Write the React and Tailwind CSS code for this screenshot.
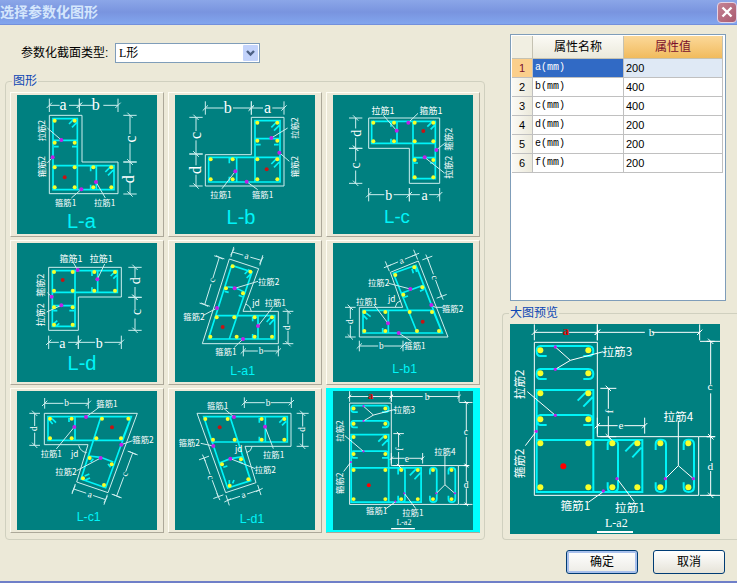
import {useState} from "react";

// dimension line from (x1,y1) to (x2,y2): end bars, slanted ticks and a gap for the letter
const dim = (x1, y1, x2, y2, bar = 20, gap = 28) => {
    const len = Math.hypot(x2 - x1, y2 - y1);
    const ux = (x2 - x1) / len;
    const uy = (y2 - y1) / len;
    const half = (len - gap) / 2;
    const ends = [[x1, y1], [x2, y2]].map(([x, y]) =>
        `M${x - uy * bar} ${y + ux * bar}L${x + uy * bar} ${y - ux * bar}` +
        `M${x - (ux - uy) * 8} ${y - (ux + uy) * -8}L${x + (ux - uy) * 8} ${y + (ux + uy) * -8}`
    ).join("");
    return `M${x1} ${y1}l${ux * half} ${uy * half}M${x2} ${y2}l${-ux * half} ${-uy * half}${ends}`;
}

const SHAPES = [
    {
        name: "L-a", box: "27 21 420 417", title: [220, 400, 60],
        outline: "M124 82H222V222H330V317H124Z",
        steel: "M135 92H208V305H135ZM135 233H318V305H135M138 176H152M135 157H208M192 176H206M265 235V303M248 250V236H262M248 290V303M183 108L199 92M192 118L208 102M292 252L308 236M300 262L316 246",
        leaders: "M118 120L160 156M118 225L134 208M190 330L220 304M292 330L264 282",
        dims: [[124, 52, 214, 52], [214, 52, 330, 52], [366, 82, 366, 222], [366, 222, 366, 318]],
        letters: [[165, 50, "a", 0], [263, 50, "b", 0], [366, 153, "c", -90], [362, 274, "d", -90]],
        letterSize: 48,
        bars: [[140, 98], [200, 98], [140, 164], [200, 164], [140, 238], [200, 238], [140, 298], [200, 298], [256, 238], [310, 238], [256, 298], [310, 298]],
        ties: [[160, 156], [134, 208], [220, 304], [264, 282]],
        core: [170, 268],
        labels: [[100, 128, "拉筋2", -90], [100, 236, "箍筋2", -90], [173, 343, "箍筋1", 0], [290, 343, "拉筋1", 0]],
    },
    {
        name: "L-b", box: "27 21 420 417", title: [225, 386, 60],
        outline: "M118 200H256V88H354V294H118Z",
        steel: "M267 98H342V282H267ZM128 208H342V282H128ZM267 152H342M270 170H284M324 170H338M212 210V282M190 226V211H204M190 266V281M316 118L332 102M324 128L340 112M316 228L332 212M324 238L340 222",
        leaders: "M316 150L365 120M340 194L370 220M208 250L168 302M242 281L275 305",
        dims: [[118, 60, 256, 60], [256, 60, 354, 60], [90, 88, 90, 198], [90, 198, 90, 294]],
        letters: [[185, 58, "b", 0], [305, 58, "a", 0], [90, 142, "c", -90], [88, 246, "d", -90]],
        letterSize: 48,
        bars: [[274, 104], [334, 104], [274, 158], [334, 158], [134, 214], [200, 214], [274, 214], [334, 214], [134, 274], [200, 274], [274, 274], [334, 274]],
        ties: [[316, 150], [340, 194], [208, 250], [242, 281]],
        core: [302, 244],
        labels: [[383, 120, "拉筋2", -90], [384, 236, "箍筋2", -90], [165, 318, "拉筋1", 0], [290, 318, "箍筋1", 0]],
    },
    {
        name: "L-c", box: "27 21 420 417", title: [219, 384, 56],
        outline: "M134 90H347V286H256V181H134Z",
        steel: "M143 100H334V166H143ZM267 100H334V272H267ZM219 100V166M201 116V102M201 152V165M267 209H334M270 225H282M318 225H331M310 116L326 100M320 124L334 110",
        leaders: "M218 128L178 82M253 104L282 76M337 186L362 166M302 208L360 254",
        dims: [[95, 90, 95, 181], [95, 181, 95, 286], [134, 320, 256, 320], [256, 320, 347, 320]],
        letters: [[97, 136, "d", -90], [95, 232, "c", -90], [194, 322, "b", 0], [302, 322, "a", 0]],
        letterSize: 42,
        bars: [[148, 104], [210, 104], [272, 104], [328, 104], [148, 160], [210, 160], [272, 160], [328, 160], [272, 216], [328, 216], [272, 268], [328, 268]],
        ties: [[218, 128], [253, 104], [337, 186], [302, 208]],
        core: [298, 129],
        labels: [[177, 68, "拉筋1", 0], [321, 66, "箍筋1", 0], [373, 154, "箍筋2", -90], [373, 238, "拉筋2", -90]],
        labelSize: 27,
    },
    {
        name: "L-d", box: "27 15 420 417", title: [222, 376, 60],
        outline: "M122 88H340V177H211V277H122Z",
        steel: "M133 98H328V163H133ZM133 98H201V265H133ZM269 98V163M252 114V100M252 148V162M133 203H201M136 218H148M184 218H198M308 114L322 100M316 122L328 110M136 258L148 248M142 266L154 256",
        leaders: "M209 96L196 74M268 124L290 78M131 176L118 164M160 202L116 222",
        dims: [[381, 88, 381, 178], [381, 178, 381, 277], [122, 313, 211, 313], [211, 313, 340, 313]],
        letters: [[383, 128, "d", -90], [386, 222, "c", -90], [163, 315, "a", 0], [274, 315, "b", 0]],
        letterSize: 42,
        bars: [[138, 102], [194, 102], [259, 102], [321, 102], [138, 158], [194, 158], [259, 158], [321, 158], [138, 208], [194, 208], [138, 260], [194, 260]],
        ties: [[209, 96], [268, 124], [131, 176], [160, 202]],
        core: [164, 126],
        labels: [[189, 61, "箍筋1", 0], [280, 61, "拉筋1", 0], [98, 142, "箍筋2", -90], [98, 230, "拉筋2", -90]],
        labelSize: 27,
    },
    {
        name: "L-a1", box: "27 15 420 417", title: [230, 398, 37],
        outline: "M190 63L278 92L231 220H337V317H109ZM240 198Q254 204 256 220",
        steel: "M197 82L258 102L190 303H127ZM150 233H326V303H190M276 233V303M260 250V236M260 288V302M184 147Q208 146 234 162M176 160L188 163M218 172L230 176M236 108L250 94M242 120L256 106M302 252L316 236M310 260L324 244",
        leaders: "M206 151L276 130M153 210L112 232M276 264L320 208M231 303L205 328",
        dims: [[199, 42, 286, 67, 16, 22], [160, 58, 116, 200, 16, 18], [232, 339, 337, 339, 16, 18], [366, 220, 366, 317, 16, 20]],
        letters: [[242, 54, "a", 15], [138, 126, "c", -70], [285, 338, "b", 0], [364, 269, "d", -90]],
        letterSize: 28,
        bars: [[200, 85], [253, 101], [180, 151], [231, 166], [152, 238], [205, 238], [266, 238], [318, 238], [133, 296], [212, 296], [266, 296], [318, 296]],
        ties: [[206, 151], [153, 210], [276, 264], [231, 303]],
        core: [170, 267],
        labels: [[308, 130, "拉筋2", 0], [84, 233, "箍筋2", 0], [328, 192, "拉筋1", 0], [180, 338, "箍筋1", 0], [270, 193, "jd", 0]],
    },
    {
        name: "L-b1", box: "27 15 420 417", title: [242, 393, 37],
        outline: "M106 208H236L199 103L283 69L372 297H106ZM214 207Q216 192 230 188",
        steel: "M117 217H327L355 285H117ZM208 106L276 82L355 285H280ZM193 217V285M176 285V270M234 165L298 142M240 178L252 174M288 160L300 154M124 224L140 236M118 232L130 244M264 92L268 106M274 88L278 102",
        leaders: "M259 153L194 136M322 201L334 208H356M192 256L150 200M224 285L262 310",
        dims: [[190, 85, 275, 50, 16, 22], [310, 60, 353, 175, 16, 18], [79, 208, 79, 297, 16, 20], [106, 324, 237, 324, 16, 18]],
        letters: [[232, 68, "a", -22], [332, 118, "c", 70], [77, 251, "d", -90], [172, 323, "b", 0]],
        letterSize: 28,
        bars: [[214, 111], [271, 88], [238, 170], [295, 148], [121, 222], [184, 222], [257, 222], [324, 222], [121, 279], [184, 279], [279, 279], [345, 279]],
        ties: [[259, 153], [322, 201], [192, 256], [224, 285]],
        core: [296, 251],
        labels: [[164, 132, "拉筋2", 0], [128, 188, "拉筋1", 0], [386, 209, "箍筋2", 0], [273, 322, "箍筋1", 0], [203, 180, "jd", 0]],
    },
    {
        name: "L-c1", box: "27 21 420 417", title: [242, 400, 37],
        outline: "M109 88H388L300 326L206 294L240 182H109ZM212 184Q218 204 236 206",
        steel: "M120 98H370L342 169H120ZM279 98H370L293 311L219 285ZM201 98V169M183 114V102M242 216L278 220L316 234M248 234L256 224M300 240L308 250M124 108L134 120M132 104L144 116M230 276L244 270M232 288L246 282",
        leaders: "M234 99L276 68M199 129L145 195M340 182L374 170M278 222L206 260",
        dims: [[110, 58, 241, 58, 16, 18], [80, 88, 80, 184, 16, 20], [374, 207, 326, 336, 16, 18], [197, 315, 293, 347, 16, 22]],
        letters: [[176, 57, "b", 0], [78, 134, "d", -90], [350, 270, "c", -70], [246, 331, "a", 15]],
        letterSize: 28,
        bars: [[126, 104], [191, 104], [282, 104], [361, 104], [126, 163], [191, 163], [265, 163], [339, 163], [245, 222], [311, 241], [225, 283], [288, 303]],
        ties: [[234, 99], [199, 129], [340, 182], [278, 222]],
        core: [312, 130],
        labels: [[297, 56, "箍筋1", 0], [405, 164, "箍筋2", 0], [130, 207, "拉筋1", 0], [174, 261, "拉筋2", 0], [200, 207, "jd", 0]],
    },
    {
        name: "L-d1", box: "27 21 420 417", title: [258, 404, 37],
        outline: "M93 88H375V187H237L270 296L179 326ZM242 206Q256 202 258 188",
        steel: "M113 98H364V174H138ZM113 98L185 312L254 290L192 98M298 98V174M280 116V102M280 158V172M162 236L193 224L232 218M172 250L184 246M218 232L230 238M340 116L354 102M348 124L360 112M190 300V288M200 298L204 288",
        leaders: "M204 99L172 72M297 128L322 194M142 186L104 178M193 224L268 254",
        dims: [[235, 56, 376, 56, 16, 18], [410, 88, 410, 187, 18, 20], [114, 222, 157, 338, 16, 18], [185, 349, 280, 318, 16, 22]],
        letters: [[306, 56, "b", 0], [408, 136, "d", -90], [134, 280, "c", 70], [232, 332, "a", -18]],
        letterSize: 28,
        bars: [[118, 105], [185, 105], [287, 105], [355, 105], [141, 167], [206, 167], [287, 167], [355, 167], [168, 241], [225, 226], [191, 305], [247, 286]],
        ties: [[204, 99], [297, 128], [142, 186], [193, 224]],
        core: [161, 130],
        labels: [[155, 63, "箍筋1", 0], [70, 173, "箍筋2", 0], [323, 209, "拉筋1", 0], [298, 256, "拉筋2", 0], [218, 191, "jd", 0]],
    },
    {
        name: "L-a2", box: "30 87 630 630", title: [349, 684, 36], large: true,
        outline: "M103 142H292V425H596V601H103ZM600 139H660M600 601H660M596 425H646",
        underline: "M291 711H399",
        steel: "M140 183H121Q110 183 110 168Q110 153 121 153H265Q280 153 280 168Q280 183 265 183H250" +
            "M140 252H121Q110 252 110 237Q110 222 121 222H265Q280 222 280 237Q280 252 265 252H250" +
            "M110 285H280V591H110ZM110 435H427V591H110ZM140 390H121Q112 390 112 375Q112 360 121 360H265Q278 360 278 375V390H250" +
            "M233 317L260 290M250 335L278 306M376 469L405 440M397 487L424 458" +
            "M323 465V447Q323 436 337 436Q354 436 354 447V577Q354 591 337 591Q323 591 323 577V562" +
            "M467 465V447Q467 434 482 434Q498 434 498 447V577Q498 591 482 591Q467 591 467 577V562" +
            "M551 465V447Q551 434 566 434Q582 434 582 447V577Q582 591 566 591Q551 591 551 577V562",
        leaders: "M166 156L211 196L166 223M211 196L310 170M82 290L166 361M76 452L109 409M265 622L310 590M403 620L351 551M535 377V512L496 551M535 512L580 551M325 425L340 440",
        dims: [[103, 112, 292, 112, 24, 20], [292, 112, 599, 112, 24, 22], [632, 139, 632, 425, 12, 26], [632, 425, 632, 601, 12, 30], [292, 392, 434, 392, 24, 20], [325, 280, 325, 425, 24, 22]],
        letters: [[455, 111, "b", 0], [630, 272, "c", 0], [631, 513, "d", 0], [363, 391, "e", 0], [327, 350, "f", -90]],
        letterSize: 34,
        redLetter: [198, 107, "a"],
        bars: [[121, 166], [265, 166], [121, 235], [265, 235], [121, 295], [265, 295], [121, 373], [265, 373], [121, 445], [265, 445], [337, 445], [412, 445], [481, 445], [565, 445], [121, 577], [265, 577], [337, 577], [412, 577], [481, 577], [565, 577]],
        ties: [[166, 156], [166, 223], [166, 361], [109, 409], [351, 551], [310, 588], [496, 551], [580, 551]],
        core: [190, 514],
        labels: [[352, 167, "拉筋3", 0], [535, 360, "拉筋4", 0], [56, 268, "拉筋2", -90], [56, 505, "箍筋2", -90], [226, 628, "箍筋1", 0], [390, 635, "拉筋1", 0]],
        labelSize: 35,
    },
];

const PROPERTIES = [
    {name: "a(mm)", value: 200},
    {name: "b(mm)", value: 400},
    {name: "c(mm)", value: 400},
    {name: "d(mm)", value: 200},
    {name: "e(mm)", value: 200},
    {name: "f(mm)", value: 200},
];

const Label = ({item, size, className}) => {
    const [x, y, text, angle = 0] = item;
    return (
        <text x={x} y={y} fontSize={size} textAnchor="middle" dominantBaseline="central"
              transform={`rotate(${angle} ${x} ${y})`} className={className}>{text}</text>
    )
}

const Drawing = ({shape, small, className}) => {
    const big = shape.large;
    const thin = big && small ? 4 : 3;
    const thick = big && small ? 8 : big ? 6 : 5;
    const white = big ? "stroke-white" : "stroke-[#cdeeee]";
    // the detailed section is drawn at a smaller scale in the grid, so its letters grow a little
    const letterSize = big && small ? 44 : shape.letterSize;
    const labelSize = big && small ? 38 : shape.labelSize || 25;
    const [titleX, titleY, titleSize] = shape.title;

    return (
        <svg viewBox={shape.box} fill="none" className={`block bg-[#008080] ${className}`} aria-label={shape.name}>
            <g className={white} strokeWidth={thin}>
                <path d={shape.outline}/>
                {shape.dims.map((d, i) => <path key={i} d={dim(...d)}/>)}
            </g>
            {shape.underline && <path d={shape.underline} className="stroke-white" strokeWidth="6"/>}
            <path d={shape.steel} className="stroke-[#00f4f8]" strokeWidth={thick}/>
            <path d={shape.leaders} className={white} strokeWidth={thin}/>
            {shape.bars.map(([x, y], i) => (
                <circle key={i} cx={x} cy={y} r={big ? 9 : 6} className="fill-[#f6ff2a]"/>
            ))}
            {shape.ties.map(([x, y], i) => (
                <circle key={i} cx={x} cy={y} r={big ? 5 : 6} className="fill-[#c020e8]"/>
            ))}
            <circle cx={shape.core[0]} cy={shape.core[1]} r={big ? 9 : 6}
                    className={big ? "fill-[#ff0000]" : "fill-[#c41414]"}/>
            {shape.letters.map((item, i) => (
                <Label key={i} item={item} size={letterSize} className="fill-white font-['Liberation_Serif',serif]"/>
            ))}
            {shape.redLetter && (
                <Label item={shape.redLetter} size={letterSize + 4} className="fill-[#e00000] font-bold font-['Liberation_Serif',serif]"/>
            )}
            {shape.labels.map((item, i) => (
                <Label key={i} item={item} size={labelSize}
                       className="fill-white font-['Noto_Sans_CJK_SC',sans-serif]"/>
            ))}
            <Label item={[titleX, titleY, shape.name]} size={titleSize}
                   className={big ? "fill-white font-['Liberation_Serif',serif]" : "fill-[#00f4f8] font-['Liberation_Sans',sans-serif]"}/>
        </svg>
    )
}

const App = () => {

    const [selected, setSelected] = useState("L-a2");
    const [row, setRow] = useState(0);

    const current = SHAPES.find((shape) => shape.name === selected);

    return (
        <div className="flex flex-col min-h-screen bg-[#ece9d8] border-b-2 border-[#6f7fc8] text-xs text-black font-['Liberation_Sans','Noto_Sans_CJK_SC',sans-serif]">
            <header className="flex items-center justify-between h-[25px] bg-linear-to-b from-[#8ba6e8] via-[#7994df] to-[#82a6ee] border-b border-[#7390dc]">
                <h1 className="text-sm leading-5 font-bold text-[#d4e6fc]">选择参数化图形</h1>
                <button type="button" aria-label="关闭"
                        className="flex items-center justify-center w-5 h-[21px] rounded-sm border border-[#e3d3e6] bg-linear-to-br from-[#c58394] to-[#a95a70]">
                    <svg viewBox="0 0 12 12" className="w-3 h-3 stroke-white" strokeWidth="2.4">
                        <path d="M1.5 1.5l9 9M10.5 1.5l-9 9"/>
                    </svg>
                </button>
            </header>

            <main className="flex flex-1 gap-[17px] pl-[5px]">
                <section className="flex-1 min-w-0 pt-[18px]">
                    <div className="flex items-center mb-[10px] pl-4">
                        <label htmlFor="section-type" className="w-[94px]">参数化截面类型:</label>
                        <div className="relative w-[145px]">
                            <select id="section-type"
                                    className="block w-full h-5 pl-[3px] pr-5 appearance-none bg-white border border-[#7f9db9] leading-4 font-['Liberation_Serif','Noto_Sans_CJK_SC',serif]">
                                <option>L形</option>
                            </select>
                            <svg viewBox="0 0 15 16" className="absolute right-[2px] top-[2px] w-[15px] h-4 pointer-events-none">
                                <rect width="15" height="16" rx="1" className="fill-[#c3d3fb]"/>
                                <path d="M4 6l3.5 3.5L11 6" fill="none" strokeWidth="2.4" className="stroke-[#4d6185]"/>
                            </svg>
                        </div>
                    </div>

                    <fieldset className="min-w-0 px-1 pt-[3px] pb-[6px] border border-[#d0d0bf] rounded">
                        <legend className="ml-[2px] px-px leading-4 text-[#0d46b4]">图形</legend>
                        <div className="grid grid-cols-3 gap-x-1 gap-y-[3px]">
                            {SHAPES.map((shape) => (
                                <button key={shape.name} type="button" onClick={() => setSelected(shape.name)}
                                        className={`px-[6px] py-[2px] border ${
                                            shape.name === selected
                                                ? "bg-[#00ffff] border-[#00ffff] border-b-[#aca899]"
                                                : "bg-[#ece9d8] border-t-[#fffdf4] border-l-[#fffdf4] border-r-[#aca899] border-b-[#aca899]"
                                        }`}>
                                    <Drawing shape={shape} small className="w-full aspect-[140/139]"/>
                                </button>
                            ))}
                        </div>
                    </fieldset>
                </section>

                <aside className="flex flex-col w-[235px] shrink-0 pt-[9px]">
                    <div className="flex-1 ml-2 mr-[11px] mb-1 p-px bg-white border border-[#7f9db9]">
                        <table className="table-fixed w-[211px] border-separate border-spacing-0">
                            <thead>
                            <tr className="h-[23px]">
                                <th scope="col" aria-label="#" className="w-[21px] p-0 bg-[#f1efe2] border-r border-b border-[#c5c2b2]"></th>
                                <th scope="col" className="w-[91px] p-0 font-normal bg-linear-to-b from-[#fbfaf5] to-[#ebe9db] border-r border-b border-[#c5c2b2]">属性名称</th>
                                <th scope="col" className="p-0 font-normal text-[#7a0f2c] bg-linear-to-b from-[#fbd898] to-[#f1bb5c] border-r border-b border-[#c5c2b2]">属性值</th>
                            </tr>
                            </thead>
                            <tbody>
                            {PROPERTIES.map((property, i) => (
                                <tr key={property.name} onClick={() => setRow(i)} className="h-[19px] text-[11px] leading-4">
                                    <th scope="row" className={`p-0 font-normal border-r border-b border-[#c0c0c0] ${
                                        i === row ? "bg-[#fbcf8c] text-[#7a0f2c]" : "bg-linear-to-r from-[#fbfaf5] to-[#ebe9db]"
                                    }`}>{i + 1}</th>
                                    <td className={`py-0 px-[2px] text-[10px] border-r border-b border-[#c0c0c0] font-['Liberation_Mono',monospace] ${
                                        i === row ? "bg-[#316ac5] text-white" : "bg-white"
                                    }`}>{property.name}</td>
                                    <td className={`py-0 px-[2px] border-r border-b border-[#c0c0c0] ${
                                        i === row ? "bg-[#dfe9f5]" : "bg-white"
                                    }`}>{property.value}</td>
                                </tr>
                            ))}
                            </tbody>
                        </table>
                    </div>

                    <fieldset className="min-w-0 pl-[7px] pt-[3px] pb-[5px] border border-r-0 border-[#d0d0bf] rounded-l">
                        <legend className="-ml-px px-px leading-4 text-[#0d46b4]">大图预览</legend>
                        <Drawing shape={current} className="w-[210px] h-[210px]"/>
                    </fieldset>
                </aside>
            </main>

            <footer className="flex justify-end gap-[15px] pt-[10px] pr-3 pb-[7px]">
                <button type="button"
                        className="w-[72px] h-6 rounded-[3px] border border-[#003c74] bg-linear-to-b from-white to-[#ecebe5] inset-ring-2 inset-ring-[#a9c0ec]">确定</button>
                <button type="button"
                        className="w-[72px] h-6 rounded-[3px] border border-[#003c74] bg-linear-to-b from-white to-[#e6e3d8]">取消</button>
            </footer>
        </div>
    )
}
export default App
